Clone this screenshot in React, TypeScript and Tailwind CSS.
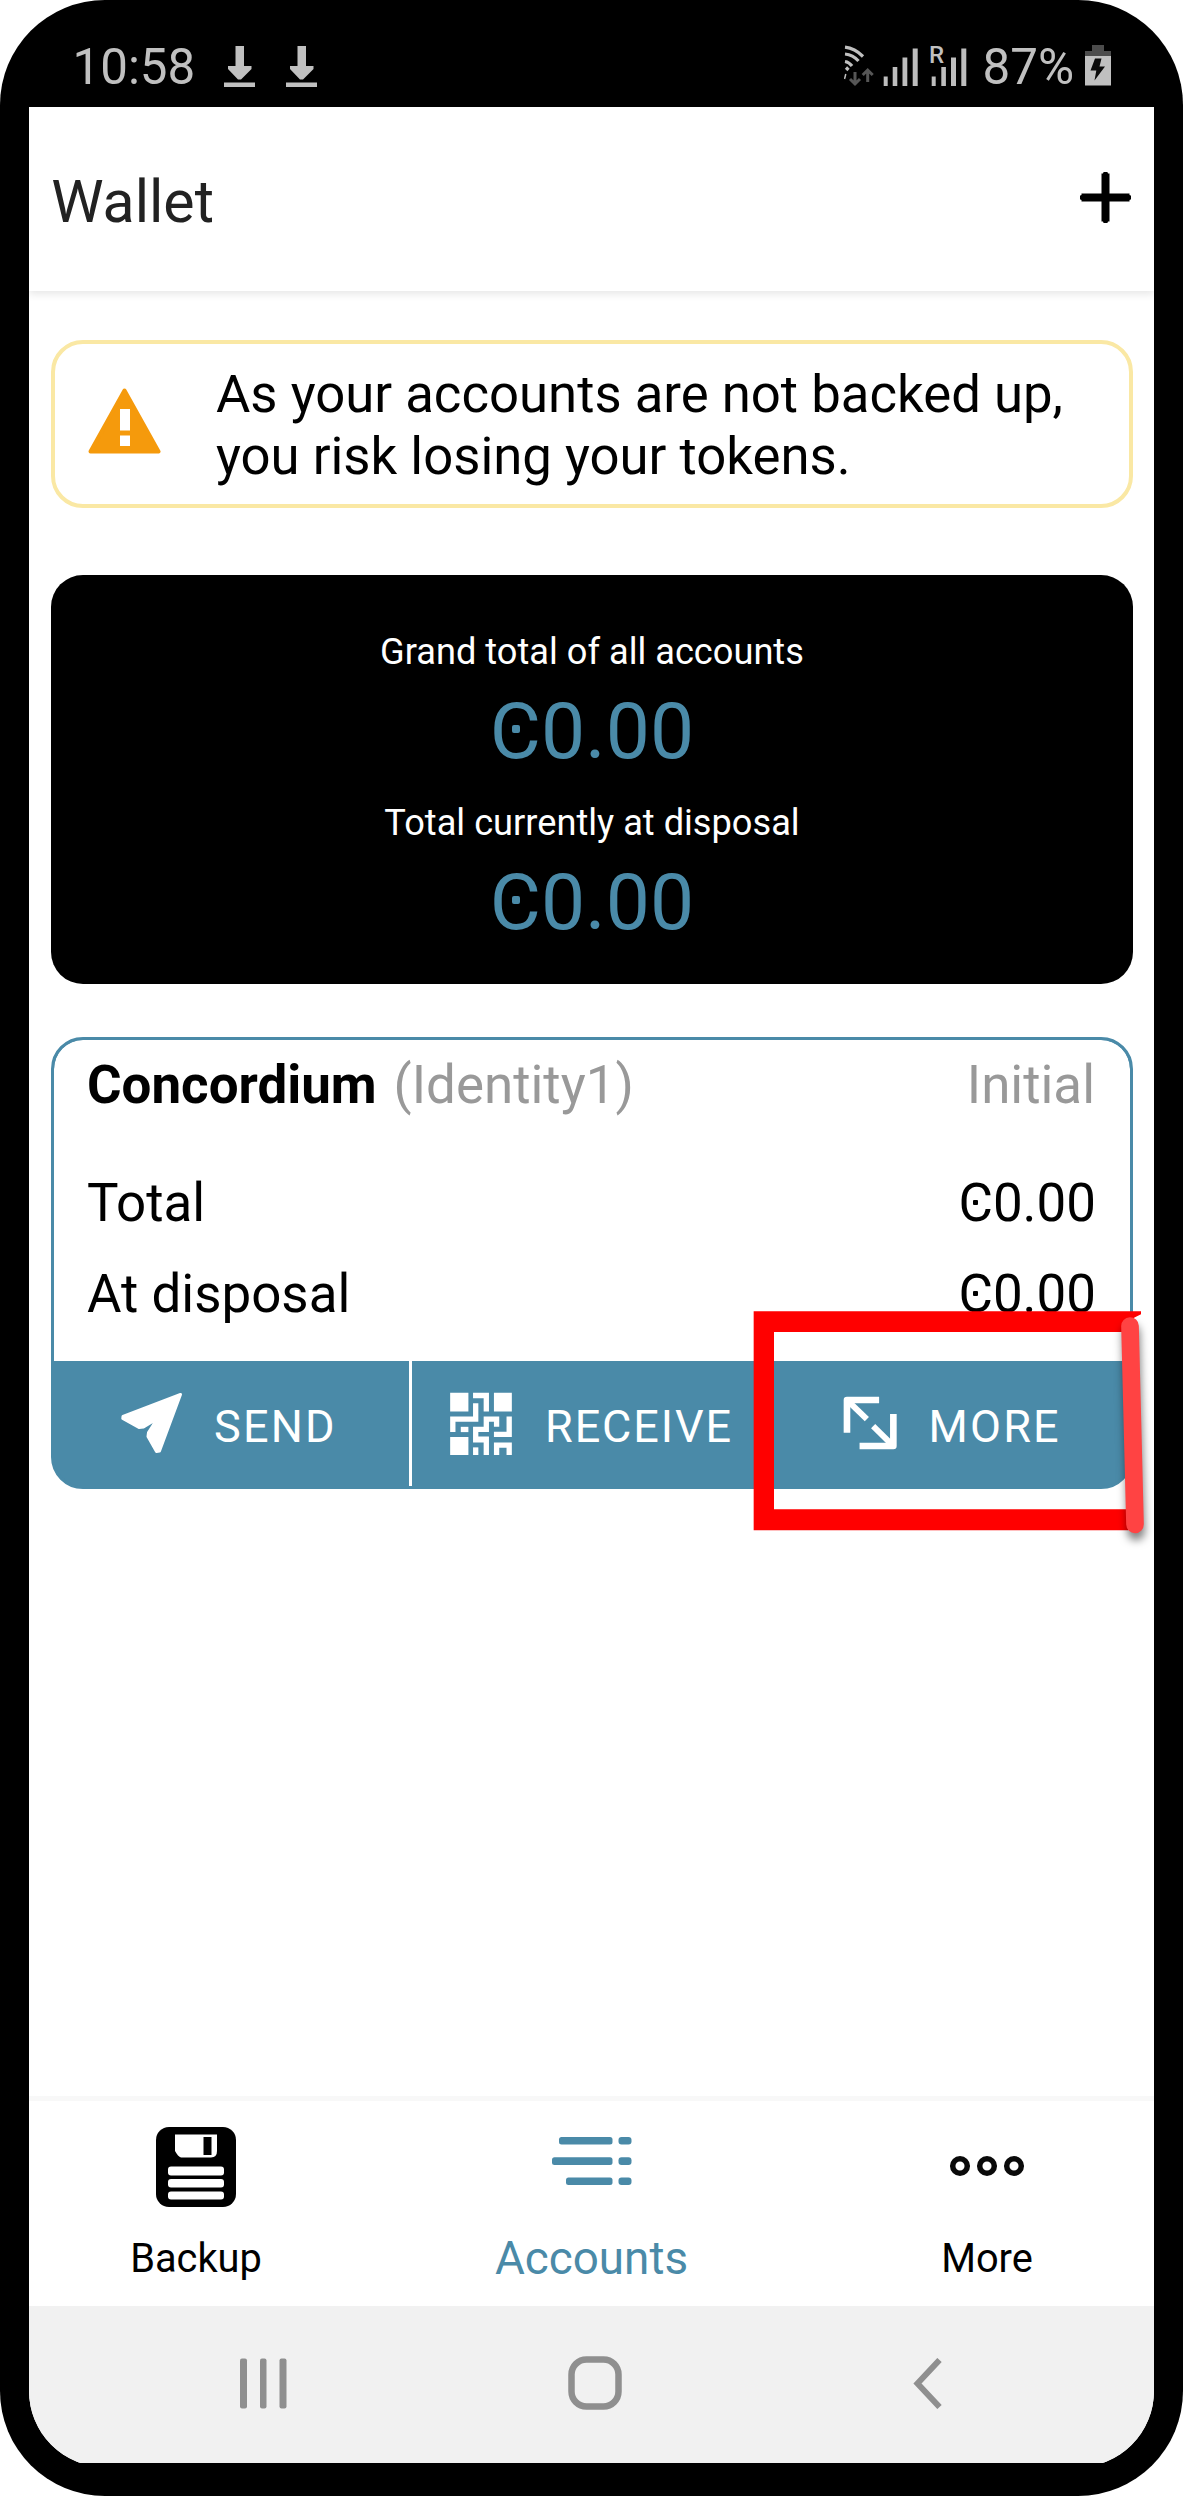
import type { ReactNode } from "react";

function Download() {
  return (
    <svg className="h-[42px] w-[31px]" viewBox="0 0 31 42" fill="#c0c0c0">
      <path d="M11.500 1h8.500v20h7.500v3L17 34.500h-3L4 24v-3h7.500z" />
      <path d="M0 37.500h31v4.500H0z" />
    </svg>
  );
}

function Signals() {
  return (
    <div className="relative h-[42px] w-[124px]">
      <svg className="h-[42px] w-[124px]" viewBox="0 0 124 42">
        <g fill="none" stroke="#c0c0c0" strokeWidth="3.2">
          <path d="M1 2.2C8 3 14 6.500 19 11.500" />
          <path d="M1 9C6.500 9.500 11 12 14.500 16" />
          <path d="M1 16.500C4 17 6.500 19 8 21" />
          <path d="M2 22.500L4.500 25" />
          <path d="M1.800 29L.5 34" strokeWidth="1.500" />
        </g>
        <g fill="none" stroke="#565656" strokeWidth="3">
          <path d="M11 27v11M6 34l5 5 5-5" />
          <path d="M23.700 37V26M18.700 30l5-5 5 5" />
        </g>
        <g fill="#bdbdbd">
          <path d="M39.700 31.500h4V41h-4zM48.700 22h4.600v19h-4.600zM58.500 12.500h4.800V41h-4.800zM68.700 3.500h5V41h-5z" />
          <path d="M87.700 31.500h4V41h-4zM97.300 22h4.600v19h-4.600zM107 12.500h5V41h-5zM117.300 3.500h5V41h-5z" />
        </g>
      </svg>
      <span className="absolute -top-[2px] left-[85px] text-[24px] leading-[24px] font-medium">R</span>
    </div>
  );
}

function Battery() {
  return (
    <svg className="h-[42px] w-[26px]" viewBox="0 0 26 42">
      <path d="M7 0h12v6h7v6H0V6h7z" fill="#4c4c4c" />
      <path d="M0 11h26v29.500H0z" fill="#c0c0c0" />
      <path d="M10 13.500h6.500l-2 8h5.500L9.500 35.500l1.800-10H5.500z" fill="#0a0a0a" />
    </svg>
  );
}

function Warning() {
  return (
    <svg className="-mt-[5px] h-[66px] w-[73px] shrink-0" viewBox="0 0 73 66">
      <path
        d="M36.500 2.500L70.500 63.500H2.500z"
        fill="#f59a0c"
        stroke="#f59a0c"
        strokeWidth="4"
        strokeLinejoin="round"
      />
      <path d="M32 21h10v21.500H32zM32 47.500h10V58H32z" fill="#fff" />
    </svg>
  );
}

function SendIcon() {
  return (
    <svg className="h-[61px] w-[62px]" viewBox="0 0 62 61">
      <path
        d="M59.500 1.500L38.500 58 35.500 58.500 27 43.500 27.500 39.500 36.500 25.500 22.500 34 18 34.500 1.800 25.500 2 23.500z"
        fill="#fff"
        stroke="#fff"
        strokeWidth="3"
        strokeLinejoin="round"
      />
    </svg>
  );
}

function QrIcon() {
  return (
    <svg className="h-[63px] w-[62px]" viewBox="60 38 186 190" fill="#fff">
      <path d="M60 40h55v57H60zM192 40h54v57h-54zM60 174h55v54H60z" />
      <path d="M129 40h48v57h-16V57h-32z" />
      <path d="M129 72h16v56H76v31H60v-47h69z" />
      <path d="M92 143h23v16H92z" />
      <path d="M161 112h47v31h-16v-15h-15v31h-32v13h32v56h-16v-38h-32v-47h32z" />
      <path d="M230 112h16v62h-54v-16h38z" />
      <path d="M129 205h16v23h-16z" />
      <path d="M192 190h54v38h-16v-22h-22v22h-16z" />
    </svg>
  );
}

function ExpandIcon() {
  return (
    <svg
      className="h-[54px] w-[54px]"
      viewBox="308 306 163 163"
      fill="none"
      stroke="#fff"
      strokeWidth="20"
      strokeLinejoin="round"
    >
      <path d="M320 417V318H417" />
      <path d="M322 320L380 376" strokeWidth="18" />
      <path d="M358 457H460V360" />
      <path d="M458 455L399 397" strokeWidth="18" />
      <path d="M325 323h18l-18 18zM455 452h-18l18-18z" fill="#fff" strokeWidth="2" />
    </svg>
  );
}

function Amount({ big = false }: { big?: boolean }) {
  return big ? (
    <div className="relative text-[78.600px] leading-[90px] text-[#4a8aa8]">
      C0.00
      <i className="absolute top-[39px] left-[22.500px] size-[8px] rounded-[2px] bg-[#4a8aa8]" />
    </div>
  ) : (
    <div className="relative">
      C0.00
      <i className="absolute top-[26.500px] left-[15px] size-[5px] rounded-[1px] bg-black" />
    </div>
  );
}

function Action({ className, icon, label }: { className: string; icon: ReactNode; label: string }) {
  return (
    <button className={`flex h-full items-center text-[45px] leading-none text-white ${className}`}>
      {icon}
      <span className="mt-[6px]">{label}</span>
    </button>
  );
}

function Floppy() {
  return (
    <svg className="h-[80px] w-[80px]" viewBox="0 0 80 80">
      <rect width="80" height="80" rx="13" fill="#000" />
      <path d="M19 7.500h42V24q0 6.500-6 6.500H25q-3-1-6-6.500z" fill="#fff" />
      <path d="M47.500 10h8v18h-8z" fill="#000" />
      <g fill="#fff">
        <rect x="12" y="39.500" width="56" height="9" rx="3" />
        <rect x="12" y="52" width="56" height="8.500" rx="3" />
        <rect x="12" y="64.500" width="56" height="8" rx="3" />
      </g>
    </svg>
  );
}

function ListIcon() {
  return (
    <svg className="-mt-[13px] h-[50px] w-[80px]" viewBox="0 0 80 50" fill="#4a8aa8">
      <rect x="7" y="1" width="53.500" height="7.600" rx="2.500" />
      <rect x="0" y="21.300" width="60.500" height="7.600" rx="2.500" />
      <rect x="14" y="41.500" width="46.500" height="7.600" rx="2.500" />
      <rect x="66.500" y="1" width="13" height="7.600" rx="3" />
      <rect x="66.500" y="21.300" width="13" height="7.600" rx="3" />
      <rect x="66.500" y="41.500" width="13" height="7.600" rx="3" />
    </svg>
  );
}

function Dots() {
  return (
    <svg className="-mt-[2px] h-[22px] w-[76px]" viewBox="0 0 76 22" fill="none" stroke="#0a0a0a" strokeWidth="5.500">
      <circle cx="11" cy="11" r="7.300" />
      <circle cx="38" cy="11" r="7.300" />
      <circle cx="65" cy="11" r="7.300" />
    </svg>
  );
}

function Tab({ className, icon, label }: { className: string; icon: ReactNode; label: string }) {
  return (
    <div className={`flex flex-col items-center pt-[26px] ${className}`}>
      <div className="flex h-[80px] items-center">{icon}</div>
      <span className="mt-[26px] leading-[52px]">{label}</span>
    </div>
  );
}

/* Hand-drawn red marker around the MORE action. */
function Highlight() {
  return (
    <svg className="absolute top-[1295px] left-[740px] h-[260px] w-[443px]" viewBox="0 0 1329 780">
      <path d="M41 49H1203V58L1182 68 1165 111H102V643H1165V706H41z" fill="#f00" />
      <path
        d="M1170 93L1185 688"
        stroke="#ff4343"
        strokeWidth="53"
        strokeLinecap="round"
        className="drop-shadow-[3px_21px_12px_rgba(0,0,0,0.5)]"
      />
    </svg>
  );
}

export default function App() {
  return (
    <div className="relative h-[2496px] w-[1183px] overflow-hidden bg-white font-['Roboto',sans-serif] whitespace-nowrap text-black">
      <div className="h-[2496px] rounded-[105px] bg-black px-[29px]">
        <div className="flex h-[107px] items-center pt-[25px] pr-[43px] pl-[43.500px] text-[49.300px] leading-none text-[#c0c0c0]">
          <span className="mt-[3px] mr-[28.500px]">10:58</span>
          <Download />
          <span className="w-[31px]" />
          <Download />
          <div className="ml-auto flex items-center">
            <Signals />
            <span className="mt-[3px] mr-[11px] ml-[14.500px]">87%</span>
            <Battery />
          </div>
        </div>

        <div className="h-[2356px] overflow-hidden">
          <div className="flex h-[2360px] flex-col overflow-hidden rounded-b-[76px] bg-white">
            <header className="flex h-[184px] shrink-0 items-center justify-between pr-[23px] pl-[22.200px] shadow-[0_3px_8px_rgba(0,0,0,0.1)]">
              <h1 className="mt-[4px] text-[59px] leading-none text-[#222]">Wallet</h1>
              <svg className="-mt-[3px] h-[51px] w-[51px]" viewBox="0 0 51 51">
                <path d="M25.500 2v47M2 25.500h47" stroke="#000" strokeWidth="5" strokeLinecap="round" />
                <path d="M25.500 1.500v48M1.500 25.500h48" stroke="#000" strokeWidth="8" />
              </svg>
            </header>

            <main className="flex flex-1 flex-col pr-[21px] pl-[22px]">
              <section className="mt-[49px] flex h-[167.500px] items-center rounded-[32px] border-4 border-[#fae8a4] pl-[33px]">
                <Warning />
                <p className="mt-[3px] ml-[55px] text-[52.700px] leading-[62.300px]">
                  As your accounts are not backed up,
                  <br />
                  you risk losing your tokens.
                </p>
              </section>

              <section className="mt-[67.500px] flex h-[409px] flex-col items-center rounded-[32px] bg-black pt-[55.500px] text-[36.200px] leading-[42px] text-white">
                <p>Grand total of all accounts</p>
                <div className="mt-[13px]">
                  <Amount big />
                </div>
                <p className="mt-[26px]">Total currently at disposal</p>
                <div className="mt-[13.500px]">
                  <Amount big />
                </div>
              </section>

              <section className="mt-[53px] flex h-[452px] flex-col overflow-hidden rounded-[32px] border-[3px] border-[#4a8aa8] bg-[#4a8aa8]">
                <div className="h-[320.700px] rounded-t-[29px] bg-white pt-[15px] pr-[34px] pl-[33px] text-[52.900px] leading-[60px]">
                  <div className="flex justify-between text-[#999]">
                    <span>
                      <b className="mr-[17px] font-bold text-black">Concordium</b>
                      (Identity1)
                    </span>
                    <span className="mr-px">Initial</span>
                  </div>
                  <div className="mt-[58px] flex justify-between">
                    <span>Total</span>
                    <Amount />
                  </div>
                  <div className="mt-[31px] flex justify-between">
                    <span>At disposal</span>
                    <Amount />
                  </div>
                </div>
                <div className="flex flex-1">
                  <Action className="w-[355px] gap-[31px] pl-[67px] tracking-[2.200px]" icon={<SendIcon />} label="SEND" />
                  <span className="w-[3px] bg-white" />
                  <Action className="w-[355px] gap-[33px] pl-[38px] tracking-[1.900px]" icon={<QrIcon />} label="RECEIVE" />
                  <span className="w-[3px] bg-white" />
                  <Action className="flex-1 gap-[31.500px] pl-[73px] tracking-[2.200px]" icon={<ExpandIcon />} label="MORE" />
                </div>
              </section>
            </main>

            <nav className="flex h-[210px] shrink-0 border-t-[5px] border-[#f8f8f8] text-[39.800px]">
              <Tab className="w-[334px]" icon={<Floppy />} label="Backup" />
              <Tab className="w-[457px] text-[45.800px] text-[#4a8aa8]" icon={<ListIcon />} label={"Accounts"} />
              <Tab className="w-[334px]" icon={<Dots />} label="More" />
            </nav>

            <div className="flex h-[161px] shrink-0 items-center bg-[#f1f1f1] pb-[7px] pl-[210.500px]">
              <svg className="h-[51px] w-[47px]" viewBox="0 0 47 51" fill="#8f8f8f">
                <rect x="0" y=".5" width="7" height="50" rx="2" />
                <rect x="20" y=".5" width="6.500" height="50" rx="2" />
                <rect x="39.500" y=".5" width="7" height="50" rx="2" />
              </svg>
              <svg className="ml-[281.500px] h-[54px] w-[54px]" viewBox="0 0 54 54" fill="none">
                <rect x="3.500" y="3.500" width="47" height="47" rx="15" stroke="#8f8f8f" strokeWidth="6.500" />
              </svg>
              <svg className="ml-[291px] h-[51px] w-[29px]" viewBox="0 0 29 51" fill="none">
                <path d="M26.500 2L4.500 25.500 26.500 49" stroke="#8f8f8f" strokeWidth="6" />
              </svg>
            </div>
          </div>
        </div>
      </div>
      <Highlight />
    </div>
  );
}
